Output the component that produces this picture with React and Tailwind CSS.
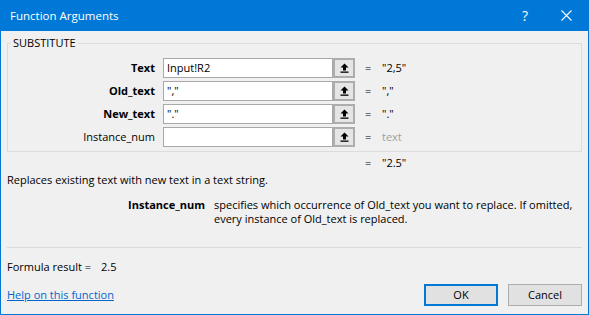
import React from "react";

function UpArrow() {
  return (
    <svg width="9" height="10" viewBox="0 0 9 10" className="block">
      <path d="M4.5 0.5 L0.5 4.5 H3 V7.5 H6 V4.5 H8.5 Z" fill="#000" />
      <rect x="0.5" y="8.5" width="8" height="1.3" fill="#000" />
    </svg>
  );
}

function ArgRow({ label, bold, value, result, gray, last }) {
  return (
    <div className={`flex items-center h-[20px] ${last ? "" : "mb-[3px]"}`}>
      <div className={`w-[147px] text-right leading-[16px] ${bold ? "font-bold" : ""}`}>{label}</div>
      <div className="ml-[8px] w-[170px] h-[20px] border border-[#a9a9a9] bg-white px-[3px] leading-[18px] overflow-hidden whitespace-nowrap">
        {value}
      </div>
      <div className="w-[22px] h-[20px] border-2 border-[#adadad] bg-[#e5e5e5] flex items-center justify-center">
        <UpArrow />
      </div>
      <div className="ml-[10px] w-[17px] leading-[16px]">=</div>
      <div className={`leading-[16px] ${gray ? "text-[#a0a0a0]" : ""}`}>{result}</div>
    </div>
  );
}

export default function App() {
  return (
    <div className="w-[589px] h-[315px] bg-[#f0f0f0] border border-t-0 border-[#0078d7] flex flex-col text-[11px] text-black font-['Open_Sans','Noto_Sans',sans-serif] overflow-hidden">
      <div className="h-[31px] shrink-0 bg-[#0078d7] flex items-center pl-[9px] text-white text-[11.5px]">
        <span className="leading-[16px]">Function Arguments</span>
        <span className="ml-auto text-[14px] leading-[16px] mr-[33px]">?</span>
        <svg width="11" height="11" viewBox="0 0 11 11" className="mr-[16px]">
          <path d="M0.5 0.5 L10.5 10.5 M10.5 0.5 L0.5 10.5" stroke="#fff" strokeWidth="1.1" />
        </svg>
      </div>
      <div className="flex-1 flex flex-col px-[6px]">
        <fieldset className="mt-[4px] border border-[#dcdcdc] pt-[7px] pb-[4px]">
          <legend className="ml-[3px] px-[2px] leading-[16px]">SUBSTITUTE</legend>
          <ArgRow label="Text" bold value="Input!R2" result={'"2,5"'} />
          <ArgRow label="Old_text" bold value={'","'} result={'","'} />
          <ArgRow label="New_text" bold value={'"."'} result={'"."'} />
          <ArgRow label="Instance_num" value="" result="text" gray last />
        </fieldset>
        <div className="mt-[3px] pl-[358px] flex leading-[16px]">
          <span className="w-[17px]">=</span>
          <span>"2.5"</span>
        </div>
        <div className="mt-[1px] leading-[16px]">Replaces existing text with new text in a text string.</div>
        <div className="mt-[10px] flex leading-[14px]">
          <div className="w-[198px] text-right font-bold">Instance_num</div>
          <div className="ml-[9px] flex-1 whitespace-nowrap">
            specifies which occurrence of Old_text you want to replace. If omitted,
            <br />
            every instance of Old_text is replaced.
          </div>
        </div>
        <div className="mt-[21px] h-px bg-[#dadada]" />
        <div className="mt-[11px] flex leading-[16px]">
          <span>Formula result =</span>
          <span className="ml-[10px]">2.5</span>
        </div>
        <div className="mt-[9px] flex items-center">
          <a href="#" className="text-[#0066cc] underline leading-[16px]">Help on this function</a>
          <button className="ml-auto w-[74px] h-[22px] border-2 border-[#0078d7] bg-[#e1e1e1] leading-[16px]">OK</button>
          <button className="ml-[10px] w-[74px] h-[22px] border border-[#adadad] bg-[#e1e1e1] leading-[16px]">Cancel</button>
        </div>
      </div>
    </div>
  );
}
